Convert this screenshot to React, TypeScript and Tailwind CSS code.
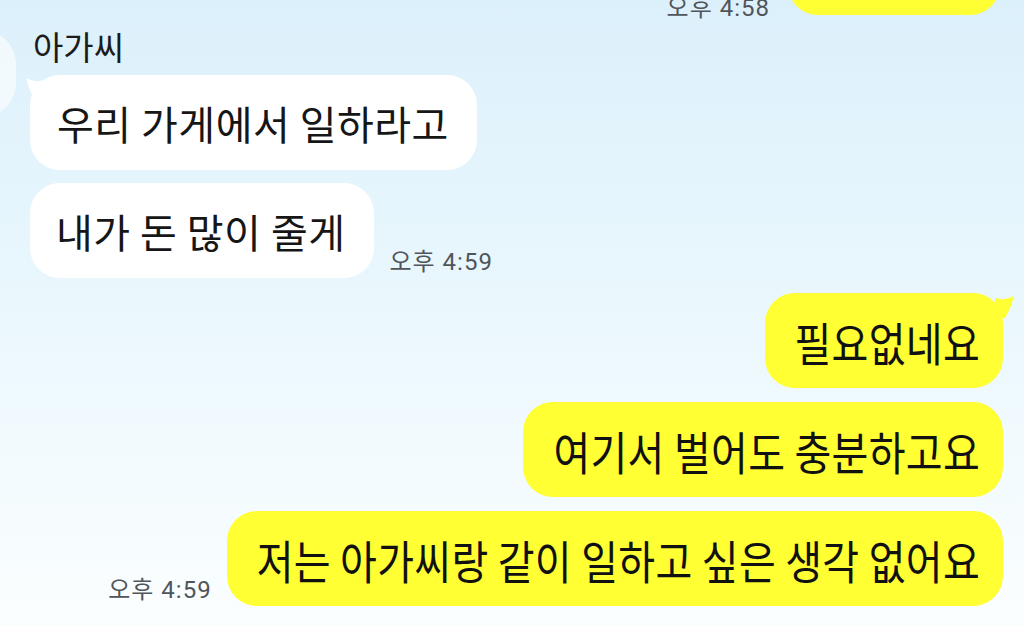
import React from "react";

const YELLOW = "bg-[#ffff33]";

const Tail = ({ side, color }: { side: "left" | "right"; color: string }) => (
  <svg
    viewBox="0 0 20 24"
    className={
      side === "left"
        ? "absolute -left-[5px] top-[1px] w-[20px] h-[24px]"
        : "absolute -right-[12px] top-[1px] w-[20px] h-[24px] -scale-x-100"
    }
  >
    {/* small spike on the bubble's top corner */}
    <path d="M1 2 Q8 6 14 5 L20 4 L20 24 L10 24 Q4 14 1 2 Z" fill={color} />
  </svg>
);

const Time = ({ children }: { children: React.ReactNode }) => (
  <span className="text-[24px] leading-none tracking-[1px] text-[#50555b] font-['Roboto','Noto_Sans_CJK_KR',sans-serif] whitespace-nowrap">
    {children}
  </span>
);

const WhiteBubble = ({
  text,
  tail,
  pad,
}: {
  text: string;
  tail?: boolean;
  pad: string;
}) => (
  <div
    className={`relative h-[95px] flex items-center rounded-[30px] bg-white ${pad}`}
  >
    {tail && <Tail side="left" color="#ffffff" />}
    <span className="relative inline-block text-[40px] leading-none text-[#161616] whitespace-nowrap tracking-[0.5px]">
      {text}
    </span>
  </div>
);

const YellowBubble = ({ text, tail }: { text: string; tail?: boolean }) => (
  <div
    className={`relative h-[95px] flex items-center rounded-[30px] ${YELLOW} pl-[30px] pr-[23px]`}
  >
    {tail && <Tail side="right" color="#ffff33" />}
    <span className="relative inline-block text-[40px] leading-none tracking-[0.3px] text-[#111111] whitespace-nowrap scale-y-[1.15]">
      {text}
    </span>
  </div>
);

export default function App() {
  return (
    <div className="w-[1024px] h-[626px] overflow-hidden bg-gradient-to-b from-[#dcf0fb] via-[#e9f7fd] via-45% to-[#fbfeff] font-['Noto_Sans_CJK_KR',sans-serif]">
      <div className="flex flex-col pr-[21px]">
        {/* previous message, cut off at the top */}
        <div className="-mt-[80px] flex items-end justify-end gap-[18px]">
          <div className="-mb-[6px]">
            <Time>오후 4:58</Time>
          </div>
          <div className={`h-[95px] w-[212px] rounded-[30px] ${YELLOW} mr-[3px]`} />
        </div>

        {/* incoming group */}
        <div className="mt-[15px] flex">
          <div className="-ml-[72px] mr-[14px] h-[87px] w-[88px] shrink-0 rounded-[34px] bg-white/60" />
          <div className="flex flex-col">
            <div className="-mt-[4px] ml-[3px] text-[33px] leading-[40px] text-[#1b1b1b]">아가씨</div>
            <div className="mt-[9px] flex">
              <WhiteBubble text="우리 가게에서 일하라고" tail pad="pl-[27px] pr-[28px]" />
            </div>
            <div className="mt-[13px] flex items-end gap-[15px]">
              <WhiteBubble text="내가 돈 많이 줄게" pad="pl-[26px] pr-[29px]" />
              <div className="mb-[3px]">
                <Time>오후 4:59</Time>
              </div>
            </div>
          </div>
        </div>

        {/* outgoing group */}
        <div className="mt-[15px] flex flex-col items-end gap-[14px]">
          <YellowBubble text="필요없네요" tail />
          <YellowBubble text="여기서 벌어도 충분하고요" />
          <div className="flex items-end gap-[15px]">
            <div className="mb-[3px]">
              <Time>오후 4:59</Time>
            </div>
            <YellowBubble text="저는 아가씨랑 같이 일하고 싶은 생각 없어요" />
          </div>
        </div>
      </div>
    </div>
  );
}
